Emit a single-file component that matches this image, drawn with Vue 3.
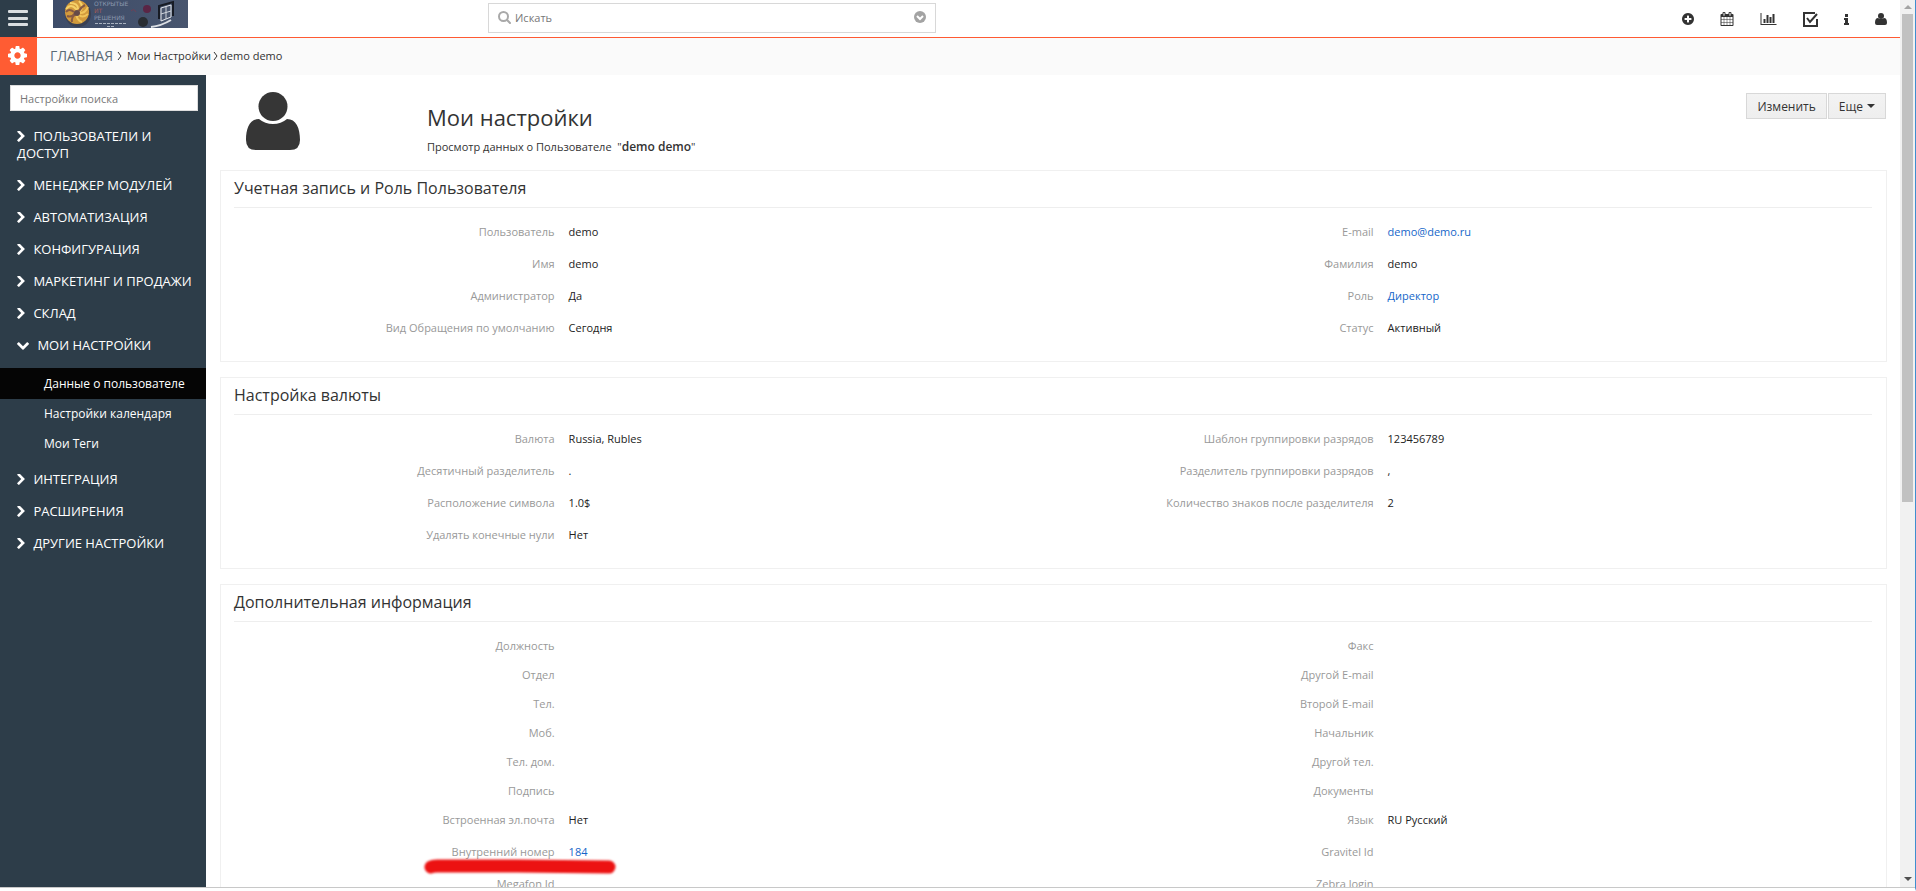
<script setup>
const chevronRight =
  'M1363 877l-742 742q-19 19-45 19t-45-19l-166-166q-19-19-19-45t19-45l531-531-531-531q-19-19-19-45t19-45l166-166q19-19 45-19t45 19l742 742q19 19 19 45t-19 45z'
const chevronDown =
  'M1683 808l-742 741q-19 19-45 19t-45-19l-742-741q-19-19-19-45.5t19-45.5l166-165q19-19 45-19t45 19l531 531 531-531q19-19 45-19t45 19l166 165q19 19 19 45.5t-19 45.5z'

const menu = [
  { title: 'ПОЛЬЗОВАТЕЛИ И ДОСТУП' },
  { title: 'МЕНЕДЖЕР МОДУЛЕЙ' },
  { title: 'АВТОМАТИЗАЦИЯ' },
  { title: 'КОНФИГУРАЦИЯ' },
  { title: 'МАРКЕТИНГ И ПРОДАЖИ' },
  { title: 'СКЛАД' },
  {
    title: 'МОИ НАСТРОЙКИ',
    items: ['Данные о пользователе', 'Настройки календаря', 'Мои Теги'],
  },
  { title: 'ИНТЕГРАЦИЯ' },
  { title: 'РАСШИРЕНИЯ' },
  { title: 'ДРУГИЕ НАСТРОЙКИ' },
]
const activeItem = 'Данные о пользователе'

const blocks = [
  {
    title: 'Учетная запись и Роль Пользователя',
    rows: [
      [{ label: 'Пользователь', value: 'demo' }, { label: 'E-mail', value: 'demo@demo.ru', link: true }],
      [{ label: 'Имя', value: 'demo' }, { label: 'Фамилия', value: 'demo' }],
      [{ label: 'Администратор', value: 'Да' }, { label: 'Роль', value: 'Директор', link: true }],
      [{ label: 'Вид Обращения по умолчанию', value: 'Сегодня' }, { label: 'Статус', value: 'Активный' }],
    ],
  },
  {
    title: 'Настройка валюты',
    rows: [
      [{ label: 'Валюта', value: 'Russia, Rubles' }, { label: 'Шаблон группировки разрядов', value: '123456789' }],
      [{ label: 'Десятичный разделитель', value: '.' }, { label: 'Разделитель группировки разрядов', value: ',' }],
      [{ label: 'Расположение символа', value: '1.0$' }, { label: 'Количество знаков после разделителя', value: '2' }],
      [{ label: 'Удалять конечные нули', value: 'Нет' }],
    ],
  },
  {
    title: 'Дополнительная информация',
    rows: [
      [{ label: 'Должность' }, { label: 'Факс' }],
      [{ label: 'Отдел' }, { label: 'Другой E-mail' }],
      [{ label: 'Тел.' }, { label: 'Второй E-mail' }],
      [{ label: 'Моб.' }, { label: 'Начальник' }],
      [{ label: 'Тел. дом.' }, { label: 'Другой тел.' }],
      [{ label: 'Подпись' }, { label: 'Документы' }],
      [{ label: 'Встроенная эл.почта', value: 'Нет' }, { label: 'Язык', value: 'RU Русский' }],
      [{ label: 'Внутренний номер', value: '184', link: true, marked: true }, { label: 'Gravitel Id' }],
      [{ label: 'Megafon Id' }, { label: 'Zebra login' }],
    ],
  },
]
const isFilled = (row) => row.some((cell) => cell.value)
</script>

<template>
  <div class="window">
    <div class="page">
      <header class="topbar">
        <button class="burger" type="button" aria-label="Меню">
          <svg width="20" height="18" viewBox="0 0 20 18">
            <g fill="#d9dee1">
              <rect y="1" width="20" height="3" rx="1" />
              <rect y="8" width="20" height="3" rx="1" />
              <rect y="14" width="20" height="3" rx="1" />
            </g>
          </svg>
        </button>
        <a class="logo" href="#" aria-label="Открытые ИТ решения">
          <svg width="135" height="28" viewBox="0 0 135 28">
            <defs>
              <linearGradient id="logoBg" x1="0" y1="0" x2="1" y2="0">
                <stop offset="0" stop-color="#3d4c69" />
                <stop offset="1" stop-color="#48556e" />
              </linearGradient>
            </defs>
            <rect width="135" height="28" fill="url(#logoBg)" />
            <circle cx="25" cy="14" r="13" fill="#3a4052" />
            <circle cx="24" cy="12" r="12" fill="#d29a3c" />
            <g fill="none" stroke-width="2">
              <path d="M13 9q5-6 10 0t0 8M17 3q8 0 8 6M26 1q6 6 0 11" stroke="#f5d169" />
              <path d="M35 7q-3 7-10 6M35 14q-6 5-10 0M29 22q-6-2-5-8" stroke="#f0c45a" />
              <path d="M14 16q5 2 8-3M19 22q-1-5 4-8M13 12q3-4 8 0M32 5q-4 2-6 6" stroke="#875a43" />
            </g>
            <circle cx="24" cy="13" r="3" fill="#654b49" />
            <g font-family="DejaVu Sans, sans-serif" font-size="6" fill="#8b98ae">
              <text x="41" y="6">ОТКРЫТЫЕ</text>
              <text x="41" y="13" fill="#a55a55">ИТ</text>
              <text x="41" y="20">РЕШЕНИЯ</text>
            </g>
            <path d="M42 23.500h32M54 26.500h7" stroke="#a9b2c0" stroke-dasharray="3 1" />
            <circle cx="94" cy="9" r="4" fill="#5a2545" />
            <circle cx="90" cy="22" r="5" fill="#292d33" />
            <path d="M78 11q3-3 5 1" fill="none" stroke="#704157" />
            <path d="M108 8l10-3v12l-10 4z" fill="#4a566e" stroke="#e7e9ed" />
            <path d="M108 14l10-3M113 7v12" stroke="#cfd4dc" />
            <path d="M98 27q10-1 20-7" fill="none" stroke="#dcdfe4" stroke-width="2" />
            <path d="M106 19V6l14-4v14" fill="none" stroke="#171b24" stroke-width="2" />
          </svg>
        </a>
        <label class="search">
          <svg width="13" height="13" viewBox="0 0 13 13" fill="none" stroke="#a9a9a9" stroke-width="2">
            <circle cx="5.500" cy="5.500" r="4.500" />
            <path d="M9 9l3 3" stroke-linecap="round" />
          </svg>
          <input type="text" placeholder="Искать" aria-label="Искать" />
          <svg width="12" height="12" viewBox="0 0 12 12">
            <circle cx="6" cy="6" r="6" fill="#a3a3a3" />
            <path d="M3 5l3 3 3-3" fill="none" stroke="#fff" stroke-width="2" />
          </svg>
        </label>
        <nav class="tools">
          <button type="button" aria-label="Создать">
            <svg width="12" height="12" viewBox="128 128 1536 1536">
              <path
                d="M1344 960v-128q0-26-19-45t-45-19h-256v-256q0-26-19-45t-45-19h-128q-26 0-45 19t-19 45v256h-256q-26 0-45 19t-19 45v128q0 26 19 45t45 19h256v256q0 26 19 45t45 19h128q26 0 45-19t19-45v-256h256q26 0 45-19t19-45zm320-64q0 209-103 385.500t-279.500 279.500-385.500 103-385.500-103-279.500-279.500-103-385.500 103-385.500 279.500-279.500 385.500-103 385.500 103 279.500 279.500 103 385.500z"
              />
            </svg>
          </button>
          <button type="button" aria-label="Календарь">
            <svg width="14" height="14" viewBox="64 0 1664 1792">
              <path
                d="M192 1664h288v-288h-288v288zm352 0h320v-288h-320v288zm-352-352h288v-320h-288v320zm352 0h320v-320h-320v320zm-352-384h288v-288h-288v288zm736 736h320v-288h-320v288zm-384-736h320v-288h-320v288zm768 736h288v-288h-288v288zm-384-352h320v-320h-320v320zm-352-864v-288q0-13-9.500-22.500t-22.500-9.500h-64q-13 0-22.500 9.500t-9.500 22.500v288q0 13 9.500 22.500t22.500 9.500h64q13 0 22.500-9.500t9.500-22.500zm736 864h288v-320h-288v320zm-384-384h320v-288h-320v288zm384 0h288v-288h-288v288zm32-480v-288q0-13-9.500-22.500t-22.500-9.500h-64q-13 0-22.500 9.500t-9.500 22.500v288q0 13 9.500 22.500t22.500 9.500h64q13 0 22.500-9.500t9.500-22.500zm384-64v1280q0 52-38 90t-90 38h-1408q-52 0-90-38t-38-90v-1280q0-52 38-90t90-38h128v-96q0-66 47-113t113-47h64q66 0 113 47t47 113v96h384v-96q0-66 47-113t113-47h64q66 0 113 47t47 113v96h128q52 0 90 38t38 90z"
              />
            </svg>
          </button>
          <button type="button" aria-label="Отчеты">
            <svg width="17" height="12" viewBox="0 128 2048 1536">
              <path
                d="M640 896v512h-256v-512h256zm384-512v1024h-256v-1024h256zm1024 1152v128h-2048v-1536h128v1408h1920zm-640-896v768h-256v-768h256zm384-384v1152h-256v-1152h256z"
              />
            </svg>
          </button>
          <button type="button" aria-label="Задачи">
            <svg class="outline" width="15" height="15" viewBox="0 0 15 15">
              <path d="M12 1H1v13h13V7" />
              <path d="M4 6l3 4 7-8" />
            </svg>
          </button>
          <button type="button" aria-label="Информация">
            <svg width="5" height="11" viewBox="0 0 5 11">
              <path d="M1 0h3v3H1zM0 4h4v5h1v2H0V9h1V6H0z" />
            </svg>
          </button>
          <button type="button" aria-label="Профиль">
            <svg width="12" height="12" viewBox="0 0 12 12">
              <circle cx="6" cy="3" r="3" />
              <path d="M3 5q-3 0-3 5 0 2 2 2h8q2 0 2-2 0-5-3-5-3 2-6 0z" />
            </svg>
          </button>
        </nav>
      </header>

      <div class="crumbs">
        <a class="gear" href="#" aria-label="Настройки">
          <svg width="19" height="19" viewBox="128 128 1536 1536" fill="#fff">
            <path
              d="M1152 896q0-106-75-181t-181-75-181 75-75 181 75 181 181 75 181-75 75-181zm512-109v222q0 12-8 23t-20 13l-185 28q-19 54-39 91 35 50 107 138 10 12 10 25t-9 23q-27 37-99 108t-94 71q-12 0-26-9l-138-108q-44 23-91 38-16 136-29 186-7 28-36 28h-222q-14 0-24.500-8.500t-11.500-21.500l-28-184q-49-16-90-37l-141 107q-10 9-25 9-14 0-25-11-126-114-165-168-7-10-7-23 0-12 8-23 15-21 51-66.500t54-70.500q-27-50-41-99l-183-27q-13-2-21-12.500t-8-23.500v-222q0-12 8-23t19-13l186-28q14-46 39-92-40-57-107-138-10-12-10-24 0-10 9-23 26-36 98.500-107.500t94.500-71.500q13 0 26 10l138 107q44-23 91-38 16-136 29-186 7-28 36-28h222q14 0 24.500 8.500t11.500 21.500l28 184q49 16 90 37l142-107q9-9 24-9 13 0 25 10 129 119 165 170 7 8 7 22 0 12-8 23-15 21-51 66.500t-54 70.500q26 50 41 98l183 28q13 2 21 12.500t8 23.500z"
            />
          </svg>
        </a>
        <nav class="trail">
          <a class="home" href="#">ГЛАВНАЯ</a>
          <svg class="sep wide" width="5" height="8" viewBox="0 0 5 8"><path d="M1 0l3 4-3 4" /></svg>
          <a class="crumb" href="#">Мои Настройки</a>
          <svg class="sep" width="5" height="8" viewBox="0 0 5 8"><path d="M1 0l3 4-3 4" /></svg>
          <span class="crumb">demo demo</span>
        </nav>
      </div>

      <div class="body">
        <aside class="sidebar">
          <input class="filter" type="text" placeholder="Настройки поиска" aria-label="Настройки поиска" />
          <template v-for="group in menu" :key="group.title">
            <a class="group" href="#">
              <svg v-if="group.items" width="12" height="8" viewBox="90 533 1612 1035">
                <path :d="chevronDown" />
              </svg>
              <svg v-else class="closed" width="8" height="11" viewBox="346 154 1036 1484">
                <path :d="chevronRight" />
              </svg>
              {{ group.title }}
            </a>
            <ul v-if="group.items" class="submenu">
              <li v-for="item in group.items" :key="item">
                <a href="#" :class="{ active: item === activeItem }">{{ item }}</a>
              </li>
            </ul>
          </template>
        </aside>

        <main class="content">
          <div class="head">
            <div class="avatar">
              <svg width="54" height="58" viewBox="0 0 54 58" fill="#363636">
                <circle cx="27" cy="14.500" r="14.500" />
                <path d="M13 27C4 27 0 36 0 48q0 10 10 10h34q10 0 10-10C54 36 50 27 41 27q-6 5-14 5t-14-5z" />
              </svg>
            </div>
            <div class="titles">
              <h1>Мои настройки</h1>
              <p>Просмотр данных о Пользователе&nbsp; "<strong>demo demo</strong>"</p>
            </div>
            <div class="actions">
              <button type="button">Изменить</button>
              <button type="button">Еще <span class="caret"></span></button>
            </div>
          </div>

          <section v-for="block in blocks" :key="block.title" class="block">
            <h2>{{ block.title }}</h2>
            <table>
              <tbody>
                <tr v-for="(row, i) in block.rows" :key="i" :class="{ filled: isFilled(row) }">
                  <template v-for="cell in row" :key="cell.label">
                    <th scope="row">{{ cell.label }}</th>
                    <td>
                      <a v-if="cell.link" href="#">{{ cell.value }}</a>
                      <template v-else>{{ cell.value }}</template>
                      <svg v-if="cell.marked" class="marker" width="198" height="20" viewBox="0 0 198 20">
                        <path d="M10 10q2-1 6-1h80l92 1" />
                      </svg>
                    </td>
                  </template>
                  <template v-if="row.length < 2">
                    <th></th>
                    <td></td>
                  </template>
                </tr>
              </tbody>
            </table>
          </section>
        </main>
      </div>
    </div>

    <div class="scrollbar">
      <span class="arrow up"></span>
      <span class="thumb"></span>
      <span class="arrow down"></span>
    </div>
  </div>
</template>

<style>
body {
  background: #fff;
}
</style>

<style scoped>
* {
  box-sizing: border-box;
}
.window {
  display: flex;
  height: 100vh;
  overflow: hidden;
  border-right: 1px solid #3f8fcf;
  border-bottom: 3px solid #fff;
  font-family: 'Open Sans', 'Noto Sans', sans-serif;
  font-size: 11px;
  color: #333;
}
.page {
  flex: 1;
  display: flex;
  flex-direction: column;
  min-width: 0;
  overflow: hidden;
  border-bottom: 1px solid #c8c8c8;
}
a {
  text-decoration: none;
}
button {
  font: inherit;
  color: inherit;
  cursor: pointer;
}
svg {
  display: block;
  flex: none;
}

/* top bar */
.topbar {
  flex: none;
  display: flex;
  align-items: flex-start;
  height: 38px;
  border-bottom: 1px solid #ff5a33;
}
.burger {
  display: flex;
  align-items: center;
  justify-content: center;
  width: 37px;
  height: 37px;
  border: 0;
  padding: 0 2px 2px 0;
  background: #2d3d49;
}
.logo {
  margin-left: 16px;
}
.search {
  display: flex;
  align-items: center;
  gap: 4px;
  width: 448px;
  height: 30px;
  margin: 3px 0 0 300px;
  padding: 0 9px 2px;
  border: 1px solid #d8d8d8;
}
.search input {
  flex: 1;
  min-width: 0;
  border: 0;
  padding: 0;
  outline: 0;
  font: inherit;
  background: transparent;
}
input::placeholder {
  color: #777;
  opacity: 1;
}
.tools {
  display: flex;
  align-items: center;
  gap: 26px;
  height: 38px;
  margin-left: auto;
  padding-right: 13px;
}
.tools button {
  border: 0;
  padding: 0;
  background: none;
}
.tools svg {
  fill: #333;
}
.tools .outline {
  fill: none;
  stroke: #333;
  stroke-width: 2px;
}

/* breadcrumbs */
.crumbs {
  flex: none;
  display: flex;
  height: 37px;
  background: #fafafa;
}
.gear {
  display: flex;
  align-items: center;
  justify-content: center;
  width: 37px;
  margin-right: 13px;
  padding: 0 2px 2px 0;
  background: #ff5c33;
}
.trail {
  display: flex;
  align-items: center;
  padding-bottom: 2px;
}
.home {
  font-size: 14px;
  font-weight: 500;
  color: #5a6b77;
}
.crumb {
  color: #333;
}
.sep {
  margin: 0 2px;
  fill: none;
  stroke: #333;
}
.sep.wide {
  margin: 0 5px 0 4px;
}

/* sidebar */
.body {
  flex: 1;
  display: flex;
  min-height: 0;
}
.sidebar {
  flex: none;
  width: 206px;
  padding: 10px 0;
  background: #2d3d49;
}
.filter {
  display: block;
  width: 188px;
  height: 26px;
  margin: 0 0 10px 10px;
  padding: 0 9px;
  border: 1px solid #ddd;
  background: #fff;
  font: inherit;
}
.group {
  display: block;
  padding: 7px 10px 8px 17px;
  font-size: 13px;
  line-height: 17px;
  color: #fff;
}
.group svg {
  display: inline-block;
  margin-right: 5px;
  fill: #fff;
}
.group .closed {
  vertical-align: -1px;
}
.submenu {
  margin: 6px 0 5px;
  padding: 0;
  list-style: none;
}
.submenu a {
  display: block;
  padding-left: 44px;
  font-size: 12px;
  line-height: 30px;
  color: #fff;
}
.submenu .active {
  padding-top: 1px;
  background: #050505;
}

/* content */
.content {
  flex: 1;
  min-width: 0;
  padding: 0 13px 0 14px;
  overflow: hidden;
}
.head {
  display: flex;
  align-items: flex-start;
  height: 95px;
}
.avatar {
  width: 207px;
  padding: 17px 0 0 26px;
}
.titles {
  flex: 1;
}
h1 {
  margin: 27px 0 0;
  font-size: 22px;
  line-height: 30px;
  font-weight: 400;
}
p {
  margin: 6px 0 0;
  line-height: 18px;
}
strong {
  font-size: 12px;
  font-weight: 600;
}
.actions {
  display: flex;
  gap: 1px;
  padding: 18px 1px 0 0;
}
.actions button {
  display: flex;
  align-items: center;
  gap: 4px;
  height: 26px;
  padding: 0 10px;
  border: 1px solid #d8d8d8;
  background: linear-gradient(#f3f3f3, #eee);
  font-size: 12px;
}
.caret {
  border: 4px solid transparent;
  border-top-color: #333;
  border-bottom: 0;
}
.block {
  margin-bottom: 15px;
  padding: 0 14px 18px 13px;
  border: 1px solid #f0f0f0;
}
h2 {
  margin: 0 0 7px;
  padding: 7px 0 8px;
  border-bottom: 1px solid #eee;
  font-size: 16px;
  line-height: 21px;
  font-weight: 400;
}
table {
  width: 100%;
  table-layout: fixed;
  border-collapse: collapse;
}
tr {
  height: 29px;
}
tr.filled {
  height: 32px;
}
th,
td {
  padding: 8px 7px 0;
  line-height: 18px;
  vertical-align: top;
}
th {
  width: 20%;
  font-weight: 400;
  text-align: right;
  color: #999;
}
td {
  position: relative;
  width: 30%;
  color: #222;
}
td a {
  color: #1566c9;
}
.marker {
  position: absolute;
  top: 22px;
  left: -141px;
  fill: none;
  stroke: #ec1212;
  stroke-width: 13px;
  stroke-linecap: round;
  filter: blur(1px);
}

/* scrollbar */
.scrollbar {
  flex: none;
  display: flex;
  flex-direction: column;
  align-items: center;
  width: 15px;
  border-bottom: 1px solid #c8c8c8;
  background: #f1f1f1;
}
.thumb {
  width: 11px;
  height: 55%;
  margin-top: 5px;
  background: #c1c1c1;
}
.arrow {
  border: 4px solid transparent;
}
.up {
  margin-top: 5px;
  border-top: 0;
  border-bottom-color: #a3a3a3;
}
.down {
  margin: auto 0 6px;
  border-bottom: 0;
  border-top-color: #505050;
}
</style>
